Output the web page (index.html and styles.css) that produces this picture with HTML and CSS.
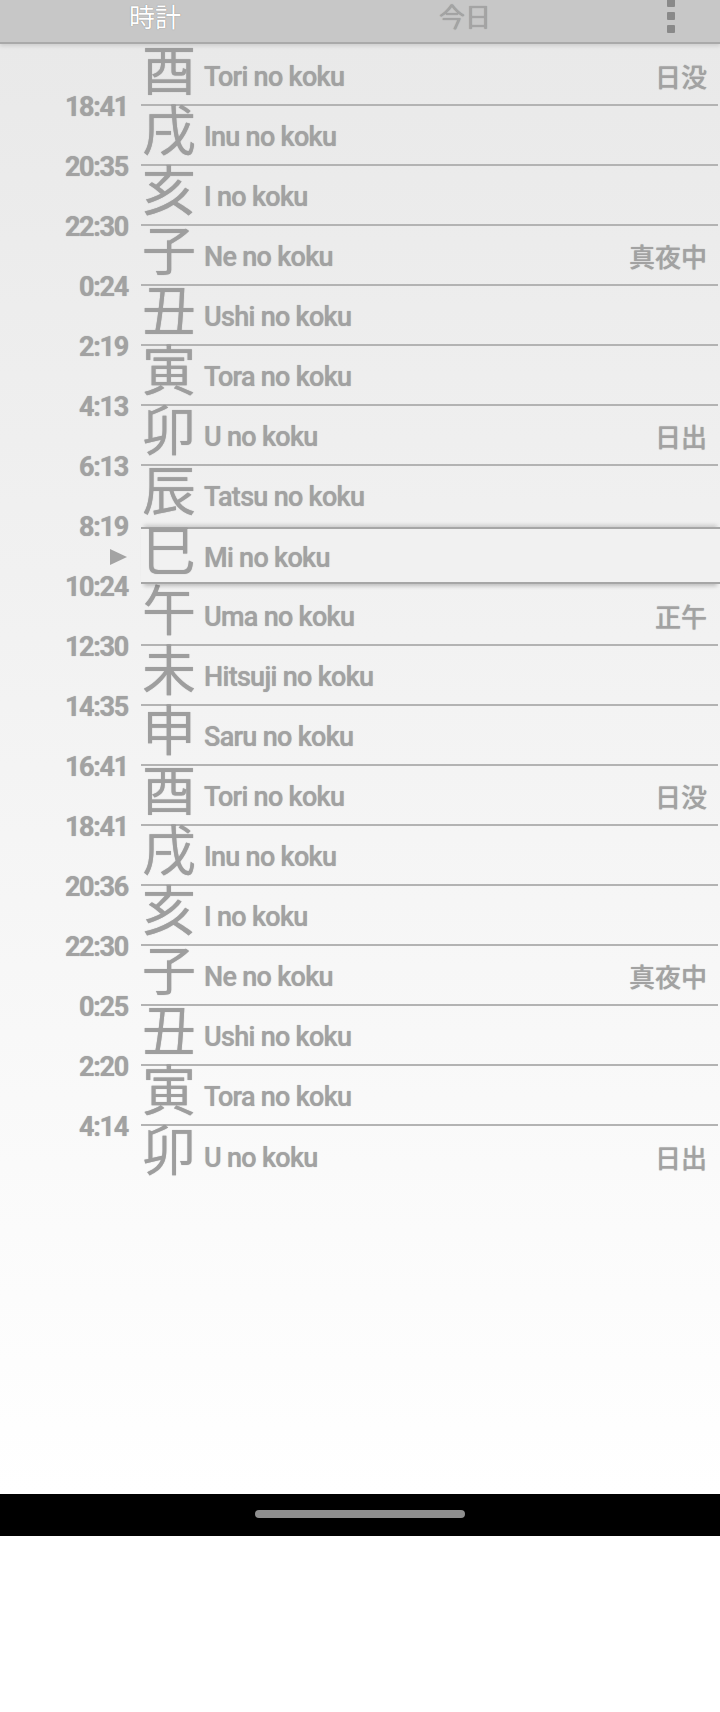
FILE: index.html
```html
<!DOCTYPE html>
<html lang="ja">
<head>
<meta charset="utf-8">
<title>時計</title>
<link rel="stylesheet" href="styles.css">
</head>
<body>
<div class="screen">
  <header class="tabs">
    <div class="tab active">時計</div>
    <div class="tab">今日</div>
    <div class="menu"><span></span><span></span><span></span></div>
  </header>
  <main class="list">
    <div class="row"><div class="when"><span class="time">18:41</span></div><div class="body"><span class="kanji">酉</span><span class="name">Tori no koku</span><span class="tag">日没</span></div></div>
    <div class="row"><div class="when"><span class="time">20:35</span></div><div class="body"><span class="kanji">戌</span><span class="name">Inu no koku</span></div></div>
    <div class="row"><div class="when"><span class="time">22:30</span></div><div class="body"><span class="kanji">亥</span><span class="name">I no koku</span></div></div>
    <div class="row"><div class="when"><span class="time">0:24</span></div><div class="body"><span class="kanji">子</span><span class="name">Ne no koku</span><span class="tag">真夜中</span></div></div>
    <div class="row"><div class="when"><span class="time">2:19</span></div><div class="body"><span class="kanji">丑</span><span class="name">Ushi no koku</span></div></div>
    <div class="row"><div class="when"><span class="time">4:13</span></div><div class="body"><span class="kanji">寅</span><span class="name">Tora no koku</span></div></div>
    <div class="row"><div class="when"><span class="time">6:13</span></div><div class="body"><span class="kanji">卯</span><span class="name">U no koku</span><span class="tag">日出</span></div></div>
    <div class="row prev"><div class="when"><span class="time">8:19</span></div><div class="body"><span class="kanji">辰</span><span class="name">Tatsu no koku</span></div></div>
    <div class="row now"><div class="when"><svg class="mark" width="17" height="16" viewBox="0 0 17 16"><polygon points="0,0 17,8 0,16"/></svg><span class="time">10:24</span></div><div class="body"><span class="kanji">巳</span><span class="name">Mi no koku</span></div></div>
    <div class="row"><div class="when"><span class="time">12:30</span></div><div class="body"><span class="kanji">午</span><span class="name">Uma no koku</span><span class="tag">正午</span></div></div>
    <div class="row"><div class="when"><span class="time">14:35</span></div><div class="body"><span class="kanji">未</span><span class="name">Hitsuji no koku</span></div></div>
    <div class="row"><div class="when"><span class="time">16:41</span></div><div class="body"><span class="kanji">申</span><span class="name">Saru no koku</span></div></div>
    <div class="row"><div class="when"><span class="time">18:41</span></div><div class="body"><span class="kanji">酉</span><span class="name">Tori no koku</span><span class="tag">日没</span></div></div>
    <div class="row"><div class="when"><span class="time">20:36</span></div><div class="body"><span class="kanji">戌</span><span class="name">Inu no koku</span></div></div>
    <div class="row"><div class="when"><span class="time">22:30</span></div><div class="body"><span class="kanji">亥</span><span class="name">I no koku</span></div></div>
    <div class="row"><div class="when"><span class="time">0:25</span></div><div class="body"><span class="kanji">子</span><span class="name">Ne no koku</span><span class="tag">真夜中</span></div></div>
    <div class="row"><div class="when"><span class="time">2:20</span></div><div class="body"><span class="kanji">丑</span><span class="name">Ushi no koku</span></div></div>
    <div class="row"><div class="when"><span class="time">4:14</span></div><div class="body"><span class="kanji">寅</span><span class="name">Tora no koku</span></div></div>
    <div class="row last"><div class="when"></div><div class="body"><span class="kanji">卯</span><span class="name">U no koku</span><span class="tag">日出</span></div></div>
  </main>
  <div class="navbar"><div class="pill"></div></div>
</div>
</body>
</html>
```
FILE: styles.css
```css
html, body {
  margin: 0;
  padding: 0;
  background: #ffffff;
}
body {
  width: 720px;
  height: 1712px;
  overflow: hidden;
  font-family: Roboto, "Noto Sans CJK JP", sans-serif;
  color: #a0a0a0;
}
.screen {
  height: 1536px;
  display: flex;
  flex-direction: column;
}
.tabs {
  flex: none;
  height: 42px;
  display: flex;
  background: #c7c7c7;
  border-bottom: 2px solid #a9a9a9;
  box-shadow: 0 2px 4px rgba(0, 0, 0, 0.12);
  position: relative;
  z-index: 2;
}
.tab {
  width: 310px;
  text-align: center;
  padding-top: 3px;
  font-family: "Noto Sans CJK JP", sans-serif;
  font-size: 26px;
  line-height: 26px;
  color: #a4a4a4;
  text-shadow: 0 0 1px rgba(0, 0, 0, 0.3);
}
.tab.active {
  color: #ffffff;
  text-shadow: 0 0 1px rgba(0, 0, 0, 0.45);
}
.menu {
  width: 100px;
  display: flex;
  flex-direction: column;
  align-items: center;
  gap: 5px;
  margin-top: -1px;
  padding-left: 2px;
  box-sizing: border-box;
}
.menu span {
  width: 8px;
  height: 8px;
  border-radius: 1px;
  background: #898989;
}
.list {
  flex: 1;
  min-height: 0;
  overflow: hidden;
  padding-top: 2px;
  background: linear-gradient(#e9e9e9, #ffffff);
}
.row {
  display: flex;
  height: 60px;
}
.when {
  width: 141px;
  flex: none;
  box-sizing: border-box;
  padding-right: 13px;
  display: grid;
  justify-items: end;
  position: relative;
  z-index: 1;
}
.time {
  grid-area: 1 / 1;
  align-self: end;
  margin-bottom: -11px;
  font-family: Roboto, sans-serif;
  font-weight: 700;
  font-size: 27px;
  line-height: 20px;
  letter-spacing: -1.3px;
  color: #a2a2a2;
  text-shadow: 0 0 1px rgba(0, 0, 0, 0.3);
}
.mark {
  grid-area: 1 / 1;
  align-self: center;
  margin-right: 1px;
  margin-top: 2px;
  fill: #a3a3a3;
}
.body {
  flex: 1;
  margin-right: 2px;
  box-sizing: border-box;
  display: flex;
  align-items: center;
  padding-right: 11px;
  border-bottom: 2px solid #b3b3b3;
}
.row.last .body,
.row.prev .body {
  border-bottom: none;
}
.row.prev .name {
  margin-top: 2px;
}
.row.now {
  align-items: flex-start;
}
.row.now .when {
  height: 60px;
}
.row.now .body {
  margin-top: 1px;
  margin-right: 0;
  padding-right: 13px;
  height: 57px;
  border-top: 2px solid #a6a6a6;
  border-bottom: 2px solid #a6a6a6;
  background: #f1f1f1;
  box-shadow: 0 5px 4px -3px rgba(0, 0, 0, 0.22), 0 -5px 4px -3px rgba(0, 0, 0, 0.16);
  position: relative;
}
.kanji {
  flex: none;
  align-self: flex-start;
  width: 54px;
  margin-left: 1px;
  margin-top: -5px;
  font-family: "Noto Sans CJK JP", sans-serif;
  font-weight: 400;
  font-size: 54px;
  line-height: 54px;
  text-align: center;
  color: #9e9e9e;
  text-shadow: 0 0 1px rgba(0, 0, 0, 0.3);
}
.row.now .kanji {
  margin-top: -8px;
}
.name {
  margin-left: 8px;
  margin-top: 4px;
  font-family: Roboto, sans-serif;
  font-weight: 500;
  font-size: 27px;
  letter-spacing: -0.7px;
  color: #a2a2a2;
  text-shadow: 0 0 1px rgba(0, 0, 0, 0.3);
}
.tag {
  margin-left: auto;
  font-family: "Noto Sans CJK JP", sans-serif;
  font-weight: 500;
  font-size: 26px;
  color: #a2a2a2;
  text-shadow: 0 0 1px rgba(0, 0, 0, 0.3);
}
.navbar {
  flex: none;
  height: 42px;
  background: #000000;
  display: flex;
  align-items: center;
  justify-content: center;
}
.pill {
  width: 210px;
  height: 8px;
  border-radius: 4px;
  background: #8e8e8e;
  margin-top: -2px;
}
```
